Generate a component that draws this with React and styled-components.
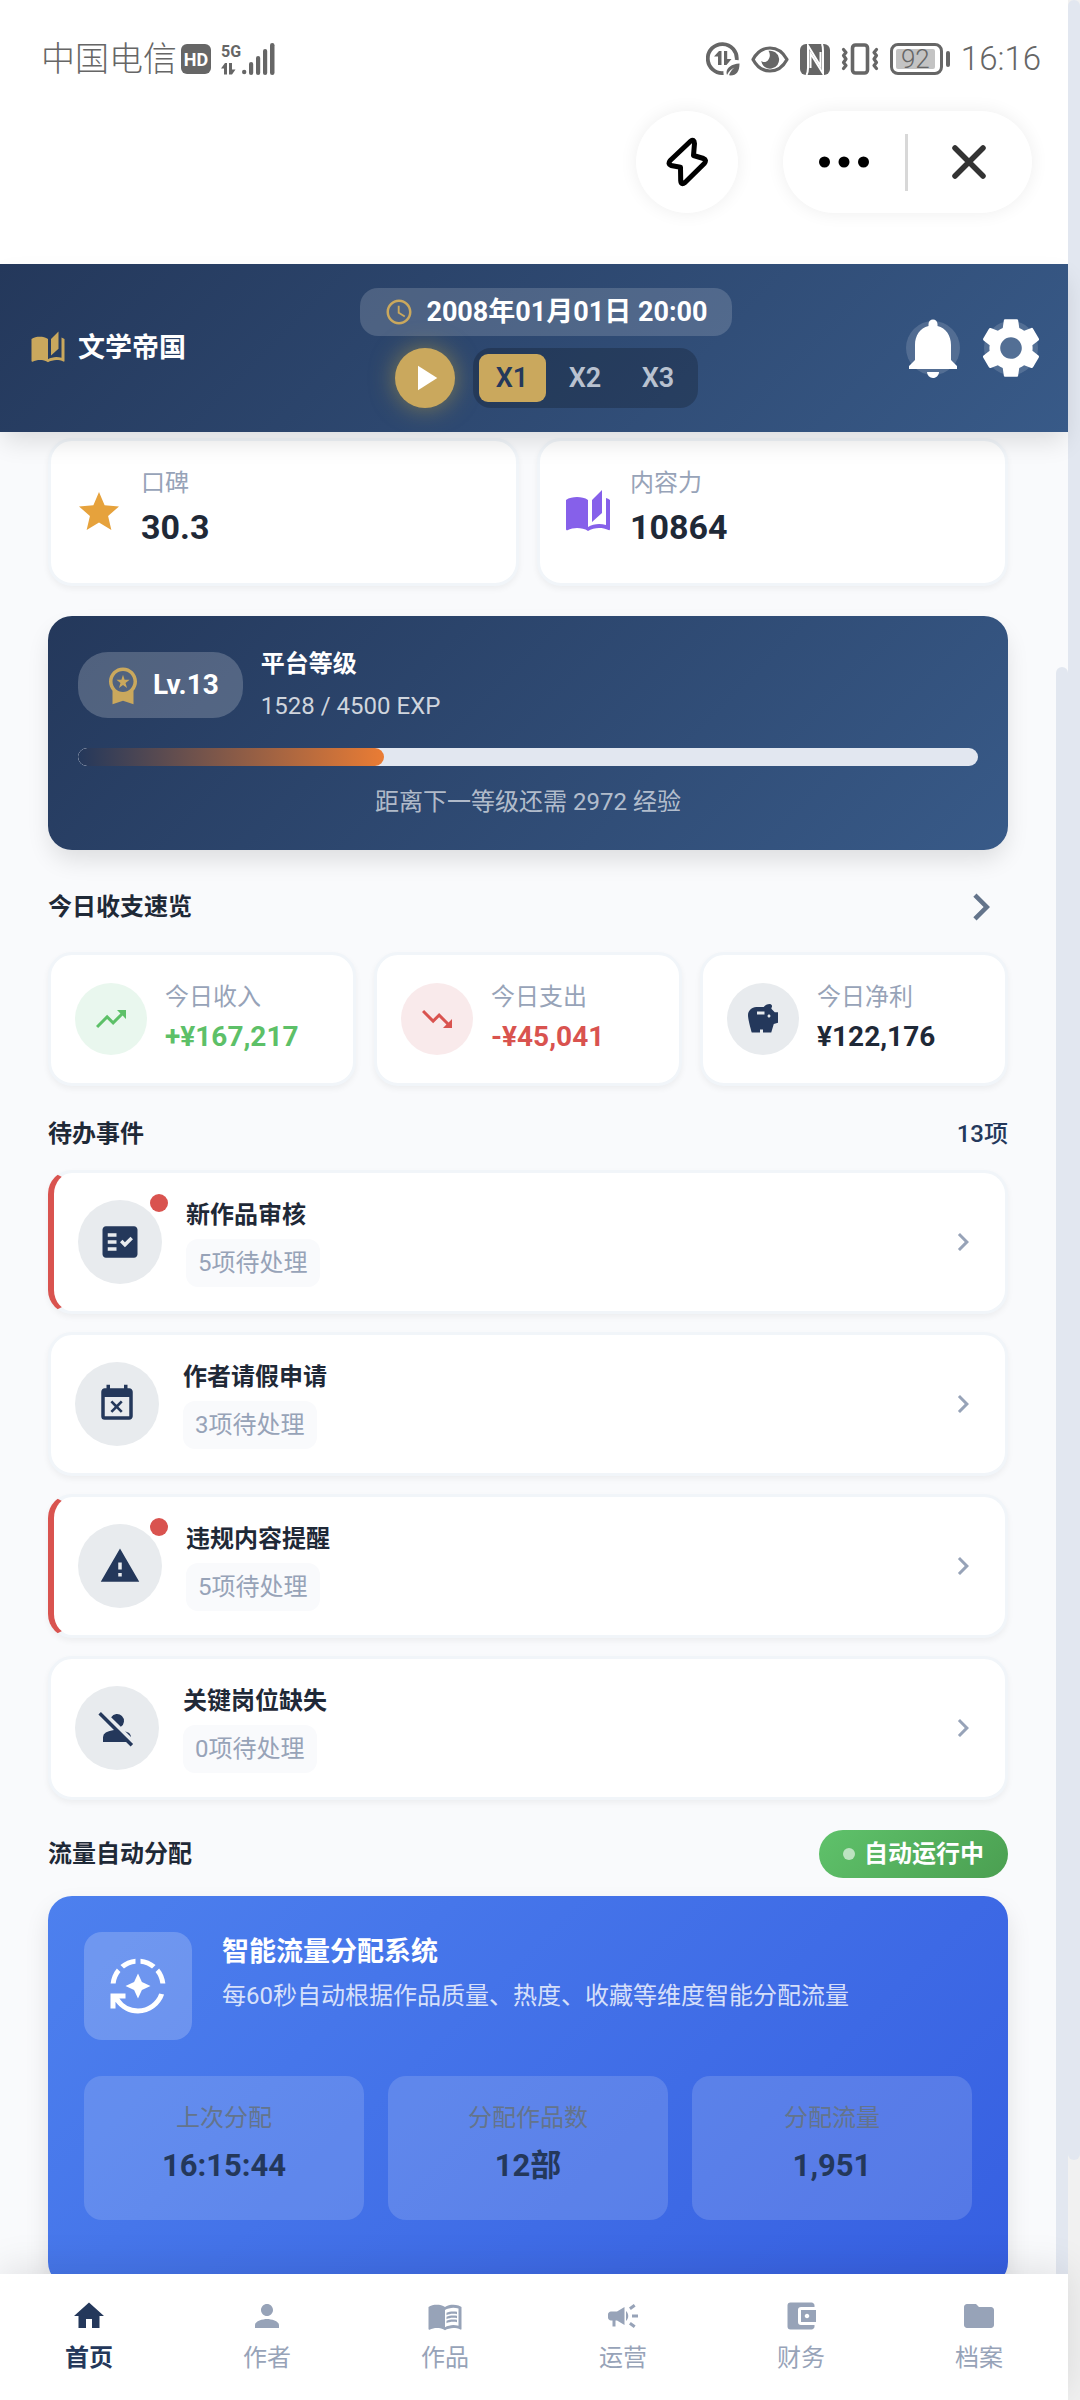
import React, { useState } from "react";
import styled, { createGlobalStyle, css } from "styled-components";
import {
  MdAccessTime,
  MdAccountBalanceWallet,
  MdAutoMode,
  MdAutoStories,
  MdCampaign,
  MdChevronRight,
  MdEventBusy,
  MdFactCheck,
  MdFolder,
  MdHome,
  MdMenuBook,
  MdNotifications,
  MdPerson,
  MdPersonOff,
  MdPlayArrow,
  MdSavings,
  MdSettings,
  MdStar,
  MdTrendingDown,
  MdTrendingUp,
  MdWarning,
  MdWorkspacePremium,
} from "react-icons/md";

const colors = {
  navy: "#24385b",
  ink: "#1f2937",
  gray: "#64748b",
  muted: "#97a3b8",
  gold: "#caa85d",
  red: "#d9534f",
  green: "#5dc068",
  line: "#f1f5f9",
  page: "#f9fafc",
  thumb: "#e2e7f0",
  status: "#666666",
};

const GlobalStyle = createGlobalStyle`
  * {
    box-sizing: border-box;
  }

  body {
    margin: 0;
    font-family: Roboto, "Noto Sans CJK SC", sans-serif;
    font-size: 24px;
    line-height: 36px;
    color: ${colors.ink};
    background: #ffffff;
  }

  button {
    padding: 0;
    border: 0;
    font: inherit;
    background: none;
    cursor: pointer;
  }

  a {
    color: inherit;
    text-decoration: none;
  }

  h1, h2, h3, p, ul {
    margin: 0;
    padding: 0;
    font-size: inherit;
    list-style: none;
  }

  svg {
    display: block;
    flex-shrink: 0;
  }
`;

/* ---------- shell ---------- */

const Screen = styled.div`
  display: flex;
  height: 100vh;
`;

const AppColumn = styled.div`
  display: flex;
  flex-direction: column;
  flex: 1;
  min-width: 0;
`;

const PageScrollbar = styled.div`
  display: flex;
  flex-direction: column;
  width: 12px;
  background: #f1f1f1;
`;

const PageThumb = styled.div`
  height: 90%;
  border-radius: 6px;
  background: ${colors.thumb};
`;

const Viewport = styled.div`
  display: flex;
  flex: 1;
  min-height: 0;
  overflow: hidden;
  background: ${colors.page};
`;

const InnerScrollbar = styled.div`
  display: flex;
  width: 12px;
  padding-top: 235px;
`;

const InnerThumb = styled.div`
  flex: 1;
  border-radius: 6px 6px 0 0;
  background: ${colors.thumb};
`;

const Main = styled.main`
  display: flex;
  flex-direction: column;
  flex: 1;
  gap: 30px;
  min-width: 0;
  padding: 6px 48px 0;

  > * {
    flex-shrink: 0;
  }
`;

/* ---------- status bar ---------- */

const StatusBar = styled.div`
  display: flex;
  align-items: center;
  justify-content: space-between;
  padding: 42px 27px 35px 41px;
  font-size: 34px;
  font-weight: 300;
  line-height: 34px;
  color: ${colors.status};
`;

const StatusGroup = styled.div`
  display: flex;
  align-items: center;
  gap: ${(props) => props.$gap}px;
`;

const HdBadge = styled.span`
  width: 30px;
  height: 30px;
  margin-right: 6px;
  border-radius: 6px;
  font-size: 18px;
  font-weight: 700;
  line-height: 31px;
  text-align: center;
  color: #ffffff;
  background: ${colors.status};
`;

const Network = styled.span`
  display: flex;
  align-items: flex-end;
  gap: 1px;
`;

const NetworkType = styled.span`
  display: flex;
  flex-direction: column;
  gap: 2px;
  font-size: 16px;
  font-weight: 700;
  line-height: 18px;
`;

const Battery = styled.span`
  display: flex;
  align-items: center;
  gap: 3px;

  &::after {
    content: "";
    width: 4px;
    height: 16px;
    border-radius: 2px;
    background: ${colors.status};
  }
`;

const BatteryCell = styled.span`
  width: 53px;
  height: 32px;
  padding: 3px;
  border: 3px solid ${colors.status};
  border-radius: 8px;
`;

const BatteryLevel = styled.span`
  display: block;
  width: 39px;
  height: 20px;
  border-radius: 2px;
  font-size: 26px;
  font-weight: 300;
  line-height: 21px;
  text-align: center;
  background: #c3c3c3;
`;

const Clock = styled.span`
  font-size: 33px;
`;

/* ---------- mini program capsule ---------- */

const CapsuleRow = styled.div`
  display: flex;
  justify-content: flex-end;
  gap: 45px;
  padding: 0 36px 51px;
`;

const capsuleBox = css`
  height: 102px;
  border-radius: 51px;
  background: #ffffff;
  box-shadow: 0 0 18px rgba(0, 0, 0, 0.07);
`;

const BoltButton = styled.button`
  ${capsuleBox}
  display: flex;
  align-items: center;
  justify-content: center;
  width: 102px;
`;

const Capsule = styled.div`
  ${capsuleBox}
  display: flex;
  align-items: center;
  width: 249px;
  padding-right: 2px;
`;

const CapsuleButton = styled.button`
  display: flex;
  flex: 1;
  align-items: center;
  justify-content: center;
  height: 100%;
`;

const CapsuleDivider = styled.span`
  width: 3px;
  height: 57px;
  background: #d8d8d8;
`;

/* ---------- header ---------- */

const Header = styled.header`
  position: relative;
  z-index: 1;
  display: flex;
  align-items: center;
  justify-content: space-between;
  padding: 24px 30px;
  color: #ffffff;
  background: linear-gradient(135deg, ${colors.navy} 0%, #385a88 100%);
  box-shadow: 0 12px 24px -3px rgba(0, 0, 0, 0.12);
`;

const Brand = styled.h1`
  display: flex;
  align-items: center;
  gap: 12px;
  font-size: 27px;
  font-weight: 700;

  svg {
    color: ${colors.gold};
  }
`;

const TimePanel = styled.div`
  display: flex;
  flex-direction: column;
  align-items: center;
  gap: 12px;
`;

const TimePill = styled.div`
  display: flex;
  align-items: center;
  gap: 12px;
  padding: 6px 24px;
  border-radius: 18px;
  font-size: 27px;
  font-weight: 700;
  background: rgba(255, 255, 255, 0.16);

  svg {
    color: ${colors.gold};
  }
`;

const Controls = styled.div`
  display: flex;
  align-items: center;
  gap: 18px;
`;

const PlayButton = styled.button`
  display: flex;
  align-items: center;
  justify-content: center;
  width: 60px;
  height: 60px;
  border-radius: 50%;
  color: #ffffff;
  background: ${colors.gold};
  box-shadow: 0 0 24px rgba(212, 175, 55, 0.5);
`;

const SpeedGroup = styled.div`
  display: flex;
  gap: 6px;
  padding: 6px;
  border-radius: 18px;
  background: rgba(0, 0, 0, 0.2);
`;

const SpeedButton = styled.button`
  min-width: 67px;
  height: 48px;
  border-radius: 9px;
  font-size: 27px;
  font-weight: 600;
  color: ${(props) => (props.$active ? colors.navy : "#b9c2d0")};
  background: ${(props) => (props.$active ? colors.gold : "none")};
`;

const HeaderActions = styled.div`
  display: flex;
  gap: 24px;
`;

const RoundButton = styled.button`
  display: flex;
  align-items: center;
  justify-content: center;
  width: 54px;
  height: 54px;
  border-radius: 50%;
  color: #ffffff;
  background: rgba(255, 255, 255, 0.15);
`;

/* ---------- cards ---------- */

const cardBox = css`
  border: 3px solid ${colors.line};
  border-radius: 24px;
  background: #ffffff;
  box-shadow: 0 3px 6px rgba(0, 0, 0, 0.05);
`;

const CardGrid = styled.div`
  display: grid;
  grid-template-columns: repeat(${(props) => props.$columns}, 1fr);
  gap: 18px;
`;

const StatCard = styled.div`
  ${cardBox}
  display: flex;
  align-items: center;
  gap: 18px;
  padding: 24px;
`;

const IconCircle = styled.span`
  display: flex;
  flex-shrink: 0;
  align-items: center;
  justify-content: center;
  width: ${(props) => props.$size}px;
  height: ${(props) => props.$size}px;
  border-radius: 50%;
  color: ${(props) => props.$color};
  background: ${(props) => props.$background};
`;

const Label = styled.p`
  color: ${colors.muted};
`;

const StatValue = styled.p`
  margin-bottom: 6px;
  font-size: 34px;
  font-weight: 700;
  line-height: 52px;
`;

const MoneyValue = styled.p`
  font-size: 28px;
  font-weight: 700;
  line-height: 44px;
  color: ${(props) => props.$color};
`;

/* ---------- level ---------- */

const LevelCard = styled.section`
  padding: 30px;
  border-radius: 24px;
  color: #ffffff;
  background: linear-gradient(135deg, ${colors.navy} 0%, #385a88 100%);
  box-shadow: 0 12px 24px -3px rgba(0, 0, 0, 0.12);
`;

const LevelTop = styled.div`
  display: flex;
  align-items: center;
  gap: 18px;
  margin-bottom: 24px;
`;

const LevelBadge = styled.div`
  display: flex;
  align-items: center;
  gap: 9px;
  height: 66px;
  padding: 0 24px;
  border-radius: 30px;
  font-size: 28px;
  font-weight: 700;
  background: rgba(255, 255, 255, 0.2);

  svg {
    color: ${colors.gold};
  }
`;

const LevelText = styled.div`
  display: flex;
  flex-direction: column;
  gap: 6px;
`;

const Exp = styled.p`
  color: rgba(255, 255, 255, 0.78);
`;

const ProgressTrack = styled.div`
  height: 18px;
  border-radius: 9px;
  overflow: hidden;
  background: ${colors.thumb};
`;

const ProgressFill = styled.div`
  height: 100%;
  border-radius: 9px;
  background: linear-gradient(90deg, ${colors.navy} 0%, #ea7c34 100%);
`;

const LevelHint = styled.p`
  margin-top: 18px;
  text-align: center;
  color: rgba(255, 255, 255, 0.65);
`;

/* ---------- sections ---------- */

const Section = styled.section`
  display: flex;
  flex-direction: column;
  gap: 18px;
`;

const SectionHead = styled.div`
  display: flex;
  align-items: center;
  justify-content: space-between;
`;

const MoreLink = styled.a`
  color: ${colors.gray};
`;

const Count = styled.span`
  font-weight: 500;
  color: ${colors.navy};
`;

const EventList = styled.ul`
  display: flex;
  flex-direction: column;
  gap: 18px;
`;

const EventCard = styled.a`
  ${cardBox}
  display: flex;
  align-items: center;
  gap: 24px;
  padding: 24px;
  ${(props) => props.$urgent && `border-left: 6px solid ${colors.red};`}
`;

const EventIcon = styled.div`
  position: relative;
`;

const RedDot = styled.span`
  position: absolute;
  top: -6px;
  right: -6px;
  width: 18px;
  height: 18px;
  border-radius: 50%;
  background: ${colors.red};
`;

const EventText = styled.div`
  display: flex;
  flex: 1;
  flex-direction: column;
  align-items: flex-start;
  gap: 6px;
`;

const Tag = styled.span`
  padding: 6px 12px;
  border-radius: 12px;
  color: ${colors.muted};
  background: ${colors.page};
`;

const Arrow = styled(MdChevronRight)`
  color: ${colors.muted};
`;

/* ---------- traffic ---------- */

const RunningBadge = styled.span`
  display: flex;
  align-items: center;
  gap: 9px;
  padding: 6px 24px;
  border-radius: 24px;
  font-weight: 700;
  color: #ffffff;
  background: linear-gradient(135deg, #5fc26b 0%, #4b9f51 100%);

  &::before {
    content: "";
    width: 12px;
    height: 12px;
    border-radius: 50%;
    background: rgba(255, 255, 255, 0.6);
  }
`;

const TrafficCard = styled.div`
  display: flex;
  flex-direction: column;
  gap: 36px;
  padding: 36px 36px 66px;
  border-radius: 24px;
  background: linear-gradient(135deg, #4d80ee 0%, #365fe1 100%);
  box-shadow: 0 12px 24px rgba(0, 0, 0, 0.1);
`;

const TrafficTop = styled.div`
  display: flex;
  gap: 30px;
`;

const TrafficIcon = styled.div`
  display: flex;
  flex-shrink: 0;
  align-items: center;
  justify-content: center;
  width: 108px;
  height: 108px;
  border-radius: 18px;
  color: #ffffff;
  background: rgba(255, 255, 255, 0.2);
`;

const TrafficTitle = styled.h3`
  margin-bottom: 6px;
  font-size: 27px;
  line-height: 40px;
  color: #ffffff;
`;

const TrafficText = styled.p`
  color: rgba(255, 255, 255, 0.8);
`;

const TrafficGrid = styled.div`
  display: grid;
  grid-template-columns: repeat(3, 1fr);
  gap: 24px;
  text-align: center;
`;

const TrafficStat = styled.div`
  display: flex;
  flex-direction: column;
  gap: 6px;
  padding: 24px 24px 30px;
  border-radius: 18px;
  color: ${colors.gray};
  background: rgba(255, 255, 255, 0.15);
`;

const TrafficValue = styled.p`
  font-size: 31px;
  font-weight: 700;
  line-height: 48px;
  color: ${colors.navy};
`;

/* ---------- bottom nav ---------- */

const BottomNav = styled.nav`
  position: relative;
  z-index: 1;
  display: flex;
  padding: 24px 0;
  background: #ffffff;
  box-shadow: 0 -6px 36px rgba(0, 0, 0, 0.1);
`;

const NavLink = styled.a`
  display: flex;
  flex: 1;
  flex-direction: column;
  align-items: center;
  gap: 6px;
  font-weight: ${(props) => (props.$active ? 700 : 400)};
  color: ${(props) => (props.$active ? colors.navy : colors.muted)};
`;

/* ---------- drawings ---------- */

function DataArrows() {
  return (
    <svg width="15" height="12" viewBox="0 0 15 12" fill="currentColor">
      <path d="M0 5.500L4 0h2v11.500H3v-6zM8 0h3v6.500h3.500L11 11.500H8z" />
    </svg>
  );
}

function SignalBars() {
  return (
    <svg width="33" height="32" viewBox="0 0 33 32" fill="currentColor">
      <circle cx="2.200" cy="29" r="2.200" />
      <rect x="7" y="19" width="4.200" height="13" rx="2.100" />
      <rect x="14" y="13" width="4.200" height="19" rx="2.100" />
      <rect x="21" y="6" width="4.200" height="26" rx="2.100" />
      <rect x="28" y="0" width="4.500" height="32" rx="2.200" />
    </svg>
  );
}

function DataSaverIcon() {
  return (
    <svg width="34" height="34" viewBox="0 0 34 34" fill="currentColor">
      <path
        d="M17.500 31A14.500 14.500 0 1 1 30.700 18"
        fill="none"
        stroke="currentColor"
        strokeWidth="3.800"
      />
      <path d="M8 14.500L13 9h2.500v14H12v-8.500zM18 9h3.200v8h4.300L20.500 23H18z" />
      <path d="M33.500 21.500c-8 .5-13 4-13 9.500l.5 2c2-4 4.500-6 7.500-7.500-2.500 2-4.500 4.500-5.500 7.800 7 .7 10.500-3.300 10.500-11.800z" />
    </svg>
  );
}

function EyeIcon() {
  return (
    <svg width="38" height="27" viewBox="0 0 38 27">
      <path
        d="M2 13.500C6 6 12 2 19 2s13 4 17 11.500C32 21 26 25 19 25S6 21 2 13.500z"
        fill="none"
        stroke="currentColor"
        strokeWidth="3.200"
        strokeLinejoin="round"
      />
      <path
        d="M17.500 4.800A9 9 0 1 1 10.200 15c2.200 1.600 5.300 1.300 6.800-.8 2.200-3 2.500-6.200.5-9.400z"
        fill="currentColor"
      />
    </svg>
  );
}

function NfcIcon() {
  return (
    <svg width="30" height="31" viewBox="0 0 30 31">
      <rect width="30" height="31" rx="6" fill="currentColor" />
      <g fill="none" stroke="#ffffff" strokeWidth="2">
        <path d="M6.500 31c1-2 1.500-4 1.500-7V1.500L20.500 22V8" />
        <path d="M22 0c.8 2 1 4 1 7v22.500L10.500 9.500V24" />
      </g>
    </svg>
  );
}

function VibrateIcon() {
  return (
    <svg
      width="38"
      height="32"
      viewBox="0 0 38 32"
      fill="none"
      stroke="currentColor"
      strokeWidth="3.200"
      strokeLinecap="round"
      strokeLinejoin="round"
    >
      <rect x="11.500" y="2" width="15" height="28" rx="3" strokeWidth="3.600" />
      <path d="M2.500 6.500L5 9.500l-2.500 3L5 16l-2.500 3.500L5 22.500l-2.500 3" />
      <path d="M35.500 6.500L33 9.500l2.500 3L33 16l2.500 3.500-2.500 3 2.500 3" />
    </svg>
  );
}

function BoltIcon() {
  return (
    <svg
      width="42"
      height="50"
      viewBox="0 0 42 50"
      fill="none"
      stroke="#000000"
      strokeWidth="5"
      strokeLinejoin="round"
    >
      <path d="M24.500 4.200L4.200 23.500Q1.500 27 5 28.500L14.500 30.200 14.700 43.500Q15 48.500 19 45.500L38.300 26.500Q41 23 37.500 21.500L27.500 18.500 28.500 6.500Q28.300 1.500 24.500 4.200z" />
    </svg>
  );
}

function DotsIcon() {
  return (
    <svg width="50" height="12" viewBox="0 0 50 12" fill="#000000">
      <circle cx="5.500" cy="6" r="5.500" />
      <circle cx="25" cy="6" r="5.500" />
      <circle cx="44.500" cy="6" r="5.500" />
    </svg>
  );
}

function CloseIcon() {
  return (
    <svg width="36" height="36" viewBox="0 0 36 36">
      <path
        d="M4 4l28 28M32 4L4 32"
        stroke="#333333"
        strokeWidth="5.500"
        strokeLinecap="round"
      />
    </svg>
  );
}

/* ---------- data ---------- */

const speeds = ["X1", "X2", "X3"];

const finance = [
  {
    label: "今日收入",
    value: "+¥167,217",
    icon: MdTrendingUp,
    color: colors.green,
    background: "#e9f7ee",
  },
  {
    label: "今日支出",
    value: "-¥45,041",
    icon: MdTrendingDown,
    color: colors.red,
    background: "#f9eaeb",
  },
  {
    label: "今日净利",
    value: "¥122,176",
    icon: MdSavings,
    color: colors.navy,
    valueColor: colors.ink,
    background: "#e8ebee",
  },
];

const events = [
  { title: "新作品审核", count: 5, icon: MdFactCheck, urgent: true },
  { title: "作者请假申请", count: 3, icon: MdEventBusy },
  { title: "违规内容提醒", count: 5, icon: MdWarning, urgent: true },
  { title: "关键岗位缺失", count: 0, icon: MdPersonOff },
];

const traffic = [
  { label: "上次分配", value: "16:15:44" },
  { label: "分配作品数", value: "12部" },
  { label: "分配流量", value: "1,951" },
];

const tabs = [
  { label: "首页", icon: MdHome },
  { label: "作者", icon: MdPerson },
  { label: "作品", icon: MdMenuBook },
  { label: "运营", icon: MdCampaign },
  { label: "财务", icon: MdAccountBalanceWallet },
  { label: "档案", icon: MdFolder },
];

const level = { current: 1528, total: 4500 };

function App() {
  const [speed, setSpeed] = useState("X1");
  const [tab, setTab] = useState("首页");

  return (
    <Screen>
      <GlobalStyle />
      <AppColumn>
        <StatusBar>
          <StatusGroup $gap={4}>
            <span>中国电信</span>
            <HdBadge>HD</HdBadge>
            <Network>
              <NetworkType>
                5G
                <DataArrows />
              </NetworkType>
              <SignalBars />
            </Network>
          </StatusGroup>
          <StatusGroup $gap={11}>
            <DataSaverIcon />
            <EyeIcon />
            <NfcIcon />
            <VibrateIcon />
            <Battery>
              <BatteryCell>
                <BatteryLevel>92</BatteryLevel>
              </BatteryCell>
            </Battery>
            <Clock>16:16</Clock>
          </StatusGroup>
        </StatusBar>
        <CapsuleRow>
          <BoltButton aria-label="bolt">
            <BoltIcon />
          </BoltButton>
          <Capsule>
            <CapsuleButton aria-label="more">
              <DotsIcon />
            </CapsuleButton>
            <CapsuleDivider />
            <CapsuleButton aria-label="close">
              <CloseIcon />
            </CapsuleButton>
          </Capsule>
        </CapsuleRow>

        <Header>
          <Brand>
            <MdAutoStories size={36} />
            文学帝国
          </Brand>
          <TimePanel>
            <TimePill>
              <MdAccessTime size={30} />
              <time>2008年01月01日 20:00</time>
            </TimePill>
            <Controls>
              <PlayButton aria-label="play">
                <MdPlayArrow size={42} />
              </PlayButton>
              <SpeedGroup>
                {speeds.map((item) => (
                  <SpeedButton
                    key={item}
                    $active={item === speed}
                    onClick={() => setSpeed(item)}
                  >
                    {item}
                  </SpeedButton>
                ))}
              </SpeedGroup>
            </Controls>
          </TimePanel>
          <HeaderActions>
            <RoundButton aria-label="notifications">
              <MdNotifications size={72} />
            </RoundButton>
            <RoundButton aria-label="settings">
              <MdSettings size={72} />
            </RoundButton>
          </HeaderActions>
        </Header>

        <Viewport>
          <Main>
            <CardGrid $columns={2}>
              <StatCard>
                <MdStar size={48} color="#e6a23c" />
                <div>
                  <Label>口碑</Label>
                  <StatValue>30.3</StatValue>
                </div>
              </StatCard>
              <StatCard>
                <MdAutoStories size={48} color="#8660ea" />
                <div>
                  <Label>内容力</Label>
                  <StatValue>10864</StatValue>
                </div>
              </StatCard>
            </CardGrid>

            <LevelCard>
              <LevelTop>
                <LevelBadge>
                  <MdWorkspacePremium size={42} />
                  Lv.13
                </LevelBadge>
                <LevelText>
                  <h2>平台等级</h2>
                  <Exp>
                    {level.current} / {level.total} EXP
                  </Exp>
                </LevelText>
              </LevelTop>
              <ProgressTrack
                role="progressbar"
                aria-label="平台等级"
                aria-valuenow={level.current}
                aria-valuemax={level.total}
              >
                <ProgressFill
                  style={{ width: `${(level.current / level.total) * 100}%` }}
                />
              </ProgressTrack>
              <LevelHint>
                距离下一等级还需 {level.total - level.current} 经验
              </LevelHint>
            </LevelCard>

            <Section>
              <SectionHead>
                <h2>今日收支速览</h2>
                <MoreLink href="#finance" aria-label="今日收支速览">
                  <MdChevronRight size={54} />
                </MoreLink>
              </SectionHead>
              <CardGrid $columns={3}>
                {finance.map((item) => (
                  <StatCard key={item.label}>
                    <IconCircle
                      $size={72}
                      $color={item.color}
                      $background={item.background}
                    >
                      <item.icon size={36} />
                    </IconCircle>
                    <div>
                      <Label>{item.label}</Label>
                      <MoneyValue $color={item.valueColor || item.color}>
                        {item.value}
                      </MoneyValue>
                    </div>
                  </StatCard>
                ))}
              </CardGrid>
            </Section>

            <Section>
              <SectionHead>
                <h2>待办事件</h2>
                <Count>13项</Count>
              </SectionHead>
              <EventList>
                {events.map((item) => (
                  <li key={item.title}>
                    <EventCard href="#event" $urgent={item.urgent}>
                      <EventIcon>
                        <IconCircle
                          $size={84}
                          $color={colors.navy}
                          $background="#e8ebee"
                        >
                          <item.icon size={42} />
                        </IconCircle>
                        {item.urgent && <RedDot />}
                      </EventIcon>
                      <EventText>
                        <h3>{item.title}</h3>
                        <Tag>{item.count}项待处理</Tag>
                      </EventText>
                      <Arrow size={36} />
                    </EventCard>
                  </li>
                ))}
              </EventList>
            </Section>

            <Section>
              <SectionHead>
                <h2>流量自动分配</h2>
                <RunningBadge>自动运行中</RunningBadge>
              </SectionHead>
              <TrafficCard>
                <TrafficTop>
                  <TrafficIcon>
                    <MdAutoMode size={60} />
                  </TrafficIcon>
                  <div>
                    <TrafficTitle>智能流量分配系统</TrafficTitle>
                    <TrafficText>
                      每60秒自动根据作品质量、热度、收藏等维度智能分配流量
                    </TrafficText>
                  </div>
                </TrafficTop>
                <TrafficGrid>
                  {traffic.map((item) => (
                    <TrafficStat key={item.label}>
                      <p>{item.label}</p>
                      <TrafficValue>{item.value}</TrafficValue>
                    </TrafficStat>
                  ))}
                </TrafficGrid>
              </TrafficCard>
            </Section>
          </Main>
          <InnerScrollbar>
            <InnerThumb />
          </InnerScrollbar>
        </Viewport>

        <BottomNav>
          {tabs.map((item) => (
            <NavLink
              key={item.label}
              href="#tab"
              $active={item.label === tab}
              onClick={() => setTab(item.label)}
            >
              <item.icon size={36} />
              {item.label}
            </NavLink>
          ))}
        </BottomNav>
      </AppColumn>
      <PageScrollbar>
        <PageThumb />
      </PageScrollbar>
    </Screen>
  );
}

export default App;
